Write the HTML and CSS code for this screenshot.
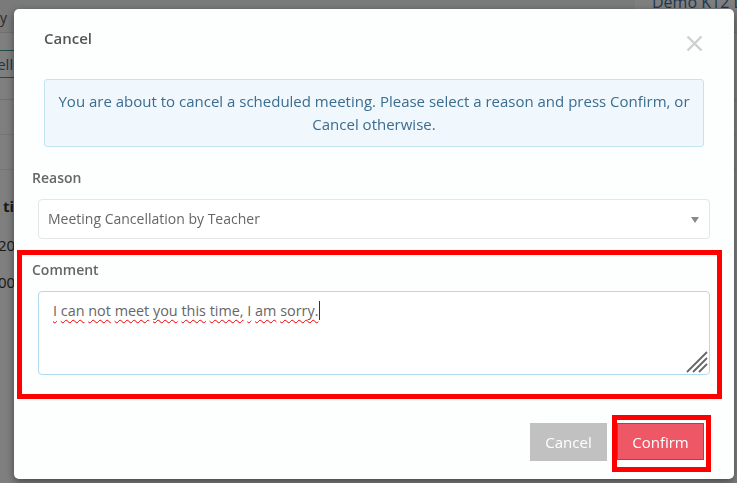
FILE: index.html
```html
<!DOCTYPE html>
<html lang="en">
<head>
<meta charset="utf-8">
<title>Cancel meeting</title>
<link rel="stylesheet" href="styles.css">
</head>
<body>
<div class="page">
  <header class="topbar">
    <span class="top-glyph">y</span>
    <span class="top-link">Demo K12 Learning</span>
  </header>
  <div class="tabs"><span class="tab-btn">Cancelled</span></div>
  <div class="row"></div>
  <div class="row"></div>
  <div class="cell bold">time</div>
  <div class="cell">2020</div>
  <div class="cell">0000</div>
</div>

<div class="overlay">
  <div class="modal" role="dialog" aria-labelledby="mtitle">
    <div class="modal-header">
      <h4 class="modal-title" id="mtitle">Cancel</h4>
      <button class="close" aria-label="Close">
        <svg width="17" height="17" viewBox="0 0 17 17"><path d="M1.5 1.5 L15.5 15.5 M15.5 1.5 L1.5 15.5" stroke="#cfcfcf" stroke-width="2.4" fill="none"/></svg>
      </button>
    </div>
    <div class="alert">You are about to cancel a scheduled meeting. Please select a reason and press Confirm, or Cancel otherwise.</div>

    <label class="label">Reason</label>
    <div class="select">
      <span>Meeting Cancellation by Teacher</span>
      <span class="caret"></span>
    </div>

    <div class="mark mark-comment">
      <label class="label">Comment</label>
      <div class="textarea" role="textbox" aria-multiline="true"><span class="sp">I</span> <span class="sp">can</span> <span class="sp">not</span> <span class="sp">meet</span> <span class="sp">you</span> <span class="sp">this</span> <span class="sp">time,</span> <span class="sp">I</span> <span class="sp">am</span> <span class="sp">sorry.</span><span class="cursor"></span>
        <svg class="grip" width="24" height="24" viewBox="0 0 24 24"><path d="M23 3 L3 23 M23 9 L9 23 M23 15 L15 23" stroke="#666" stroke-width="1.8" fill="none"/></svg>
      </div>
    </div>

    <div class="footer">
      <button class="btn btn-cancel">Cancel</button>
      <div class="mark mark-confirm"><button class="btn btn-confirm">Confirm</button></div>
    </div>
  </div>
</div>
</body>
</html>
```
FILE: styles.css
```css
* { box-sizing: border-box; }
html, body { margin: 0; padding: 0; }
body {
  width: 737px; height: 483px; overflow: hidden;
  background: #ffffff;
  font-family: "Open Sans", "Noto Sans", sans-serif;
}
.page { width: 737px; height: 483px; background: #fff; color: #333; font-size: 14px; }
.topbar { height: 33px; display: flex; justify-content: space-between; align-items: flex-start; border-bottom: 1px solid #e0e0e0; background: #f4f4f4; }
.top-glyph { padding: 8px 0 0 0; color: #555; }
.top-link { background: #fff; width: 102px; padding-left: 17px; color: #3d6fa3; font-size: 16px; line-height: 16px; margin-top: -6px; white-space: nowrap; overflow: hidden; }
.tabs { padding: 17px 0 0 0; height: 67px; border-bottom: 1px solid #e2e2e2; }
.tab-btn { display: inline-block; border: 1px solid #4a9a93; margin-left: -44px; padding: 3px 6px; color: #3c6d8e; font-size: 15px; }
.row { height: 35px; border-bottom: 1px solid #eaeaea; }
.cell { height: 37px; line-height: 40px; margin-left: -2px; font-size: 15px; }
.cell.bold { font-weight: 700; margin-top: 18px; margin-left: 3px; line-height: 37px; }
.overlay { position: fixed; inset: 0; background: rgba(0,0,0,0.5); }
.modal {
  position: absolute; left: 14px; top: 9px; width: 720px; height: 470px;
  background: #fdfefe; border-radius: 5px;
  box-shadow: 0 3px 9px rgba(0,0,0,0.45);
  display: flex; flex-direction: column;
}
.modal-header { position: relative; padding: 19px 30px 0; }
.modal-title { margin: 0; font-size: 15px; line-height: 21px; font-weight: 600; color: #555; }
.close { position: absolute; right: 31px; top: 26px; border: 0; background: none; padding: 0; width: 17px; height: 17px; }
.close svg { display: block; }
.alert {
  margin: 30px 30px 0; height: 68px; padding: 10px 12px;
  background: #f0f7fd; border: 1px solid #c3e5f1; border-radius: 3px;
  color: #3a6d8f; font-size: 15px; line-height: 23px; text-align: center;
}
.label { display: block; margin: 21px 0 0 18px; font-size: 14px; line-height: 20px; font-weight: 600; color: #666; }
.select {
  margin: 11px 24px 0; height: 40px; border: 1px solid #e6e6e6; border-radius: 4px;
  display: flex; align-items: center; justify-content: space-between;
  padding: 0 10px 1px 9px; color: #666; font-size: 14px; background: #fff;
}
.caret { width: 0; height: 0; border-left: 4px solid transparent; border-right: 4px solid transparent; border-top: 6px solid #8a8a8a; margin-top: 3px; }
.mark { border: 5px solid #ff0000; }
.mark-comment { margin: 11px 12px 0 3px; padding: 0 7px 19px 0; }
.mark-comment .label { margin: 5px 0 0 10px; }
.textarea {
  position: relative; margin: 11px 0 0 16px; height: 84px;
  border: 1px solid #aedbee; border-radius: 4px; background: #fff;
  padding: 7px 14px; color: #666; font-size: 14.4px; line-height: 23px;
}
.sp { text-decoration: underline wavy #f00000; text-decoration-thickness: 1px; text-underline-offset: 3px; }
.cursor { display: inline-block; width: 1px; height: 19px; background: #333; vertical-align: -4px; margin-left: 1px; }
.grip { position: absolute; right: 1px; bottom: 1px; }
.footer { margin-top: 16px; padding-right: 23px; display: flex; justify-content: flex-end; align-items: flex-start; gap: 5px; }
.btn { font-family: "Open Sans", "Noto Sans", sans-serif; font-size: 15px; color: #fff; border-radius: 0; cursor: pointer; }
.btn-cancel { margin-top: 8px; width: 77px; height: 38px; background: #c1c1c1; border: 1px solid #c1c1c1; }
.mark-confirm { padding: 3px 2px 7px 0; }
.btn-confirm { display: block; width: 87px; height: 37px; background: #ee5766; border: 1px solid #c93342; }
```
